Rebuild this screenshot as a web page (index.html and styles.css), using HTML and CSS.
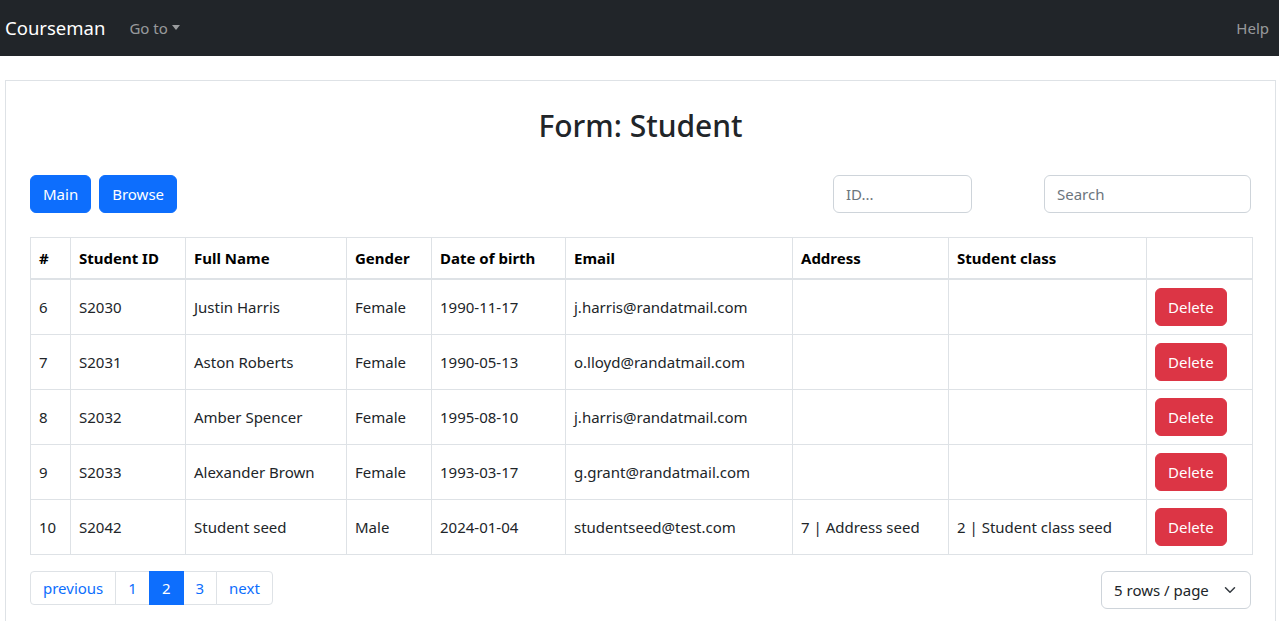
FILE: index.html
```html
<!DOCTYPE html>
<html lang="en">
<head>
<meta charset="utf-8">
<title>Courseman - Form: Student</title>
<link rel="stylesheet" href="styles.css">
</head>
<body>
<nav class="navbar">
  <div class="nav-left">
    <a class="brand" href="#">Courseman</a>
    <a class="nav-link dropdown" href="#">Go to<span class="caret"></span></a>
  </div>
  <a class="nav-link help" href="#">Help</a>
</nav>
<main class="page">
  <section class="card">
    <h2 class="title">Form: Student</h2>
    <div class="toolbar">
      <div class="btn-group">
        <button class="btn btn-primary">Main</button>
        <button class="btn btn-primary">Browse</button>
      </div>
      <div class="search-group">
        <input class="form-control id-input" type="text" placeholder="ID...">
        <input class="form-control search-input" type="text" placeholder="Search">
      </div>
    </div>
    <table class="table">
      <thead>
        <tr>
          <th class="c-num">#</th>
          <th class="c-id">Student ID</th>
          <th class="c-name">Full Name</th>
          <th class="c-gender">Gender</th>
          <th class="c-dob">Date of birth</th>
          <th class="c-email">Email</th>
          <th class="c-addr">Address</th>
          <th class="c-class">Student class</th>
          <th class="c-act"></th>
        </tr>
      </thead>
      <tbody>
        <tr>
          <td>6</td><td>S2030</td><td>Justin Harris</td><td>Female</td><td>1990-11-17</td><td>j.harris@randatmail.com</td><td></td><td></td>
          <td><button class="btn btn-danger">Delete</button></td>
        </tr>
        <tr>
          <td>7</td><td>S2031</td><td>Aston Roberts</td><td>Female</td><td>1990-05-13</td><td>o.lloyd@randatmail.com</td><td></td><td></td>
          <td><button class="btn btn-danger">Delete</button></td>
        </tr>
        <tr>
          <td>8</td><td>S2032</td><td>Amber Spencer</td><td>Female</td><td>1995-08-10</td><td>j.harris@randatmail.com</td><td></td><td></td>
          <td><button class="btn btn-danger">Delete</button></td>
        </tr>
        <tr>
          <td>9</td><td>S2033</td><td>Alexander Brown</td><td>Female</td><td>1993-03-17</td><td>g.grant@randatmail.com</td><td></td><td></td>
          <td><button class="btn btn-danger">Delete</button></td>
        </tr>
        <tr>
          <td>10</td><td>S2042</td><td>Student seed</td><td>Male</td><td>2024-01-04</td><td>studentseed@test.com</td><td>7 | Address seed</td><td>2 | Student class seed</td>
          <td><button class="btn btn-danger">Delete</button></td>
        </tr>
      </tbody>
    </table>
    <div class="table-footer">
      <ul class="pagination">
        <li class="page-item"><a class="page-link" href="#">previous</a></li>
        <li class="page-item"><a class="page-link" href="#">1</a></li>
        <li class="page-item active"><a class="page-link" href="#">2</a></li>
        <li class="page-item"><a class="page-link" href="#">3</a></li>
        <li class="page-item"><a class="page-link" href="#">next</a></li>
      </ul>
      <div class="form-select">
        <span>5 rows / page</span>
        <svg class="chevron" viewBox="0 0 16 16" width="16" height="12"><path d="m2 5 6 6 6-6" fill="none" stroke="#343a40" stroke-width="2" stroke-linecap="round" stroke-linejoin="round"/></svg>
      </div>
    </div>
  </section>
</main>
</body>
</html>
```

FILE: styles.css
```css
* { box-sizing: border-box; }

html, body {
  margin: 0;
  padding: 0;
  background: #fff;
  font-family: "Noto Sans", "Open Sans", sans-serif;
  font-size: 15px;
  line-height: 24px;
  color: #212529;
}

a { text-decoration: none; }

.navbar {
  height: 56px;
  background: #212529;
  display: flex;
  align-items: center;
  justify-content: space-between;
  padding: 0 10px 0 5px;
}

.nav-left { display: flex; align-items: center; }

.brand {
  color: #fff;
  font-size: 18.5px;
  line-height: 30px;
  padding: 5px 0;
  margin-right: 16px;
}

.nav-link {
  color: rgba(255, 255, 255, 0.55);
  padding: 8px;
  line-height: 24px;
}

.nav-link.help { padding-right: 0; }

.caret {
  display: inline-block;
  margin-left: 4px;
  vertical-align: 4px;
  border-top: 5px solid;
  border-left: 4px solid transparent;
  border-right: 4px solid transparent;
}

.page { padding: 24px 3px 0 5px; }

.card {
  border: 1px solid #dee2e6;
  border-bottom: none;
  padding: 24px 24px 40px;
  min-height: 560px;
}

.title {
  margin: 0;
  padding-top: 2px;
  text-align: center;
  font-size: 30px;
  font-weight: 500;
  line-height: 38px;
}

.toolbar {
  display: flex;
  justify-content: space-between;
  align-items: center;
  margin-top: 30px;
}

.btn-group { display: flex; gap: 8px; }

.btn {
  font-family: inherit;
  font-size: 15px;
  line-height: 24px;
  padding: 6px 12px;
  border: 1px solid transparent;
  border-radius: 6px;
  color: #fff;
  cursor: pointer;
}

.btn-primary { background: #0d6efd; border-color: #0d6efd; }
.btn-danger { background: #dc3545; border-color: #dc3545; }

.search-group { display: flex; gap: 72px; }

.form-control {
  font-family: inherit;
  font-size: 15px;
  line-height: 24px;
  padding: 6px 12px;
  border: 1px solid #ced4da;
  border-radius: 6px;
  color: #212529;
  background: #fff;
  height: 38px;
}

.form-control::placeholder { color: #6c757d; }

.id-input { width: 139px; }
.search-input { width: 207px; }

.table {
  width: 100%;
  margin-top: 24px;
  border-collapse: collapse;
  table-layout: fixed;
}

.table th, .table td {
  border: 1px solid #dee2e6;
  padding: 8px;
  text-align: left;
  vertical-align: middle;
  line-height: 24px;
  white-space: nowrap;
}

.table th { font-weight: 700; color: #000; }
.table thead th { border-bottom-width: 2px; }

.c-num { width: 40px; }
.c-id { width: 115px; }
.c-name { width: 161px; }
.c-gender { width: 85px; }
.c-dob { width: 134px; }
.c-email { width: 227px; }
.c-addr { width: 156px; }
.c-class { width: 198px; }
.c-act { width: 106px; }

.table-footer {
  display: flex;
  justify-content: space-between;
  align-items: flex-start;
  margin-top: 16px;
}

.pagination {
  display: flex;
  list-style: none;
  margin: 0;
  padding: 0;
}

.page-link {
  display: block;
  padding: 6px 12px;
  line-height: 20px;
  color: #0d6efd;
  border: 1px solid #dee2e6;
  margin-left: -1px;
  background: #fff;
}

.page-item:first-child .page-link {
  margin-left: 0;
  border-radius: 4px 0 0 4px;
}

.page-item:last-child .page-link { border-radius: 0 4px 4px 0; }

.page-item.active .page-link {
  background: #0d6efd;
  border-color: #0d6efd;
  color: #fff;
  position: relative;
}

.form-select {
  width: 150px;
  height: 38px;
  border: 1px solid #ced4da;
  border-radius: 6px;
  padding: 6px 12px;
  display: flex;
  align-items: center;
  justify-content: space-between;
  line-height: 24px;
}

.chevron { flex: none; }
```
